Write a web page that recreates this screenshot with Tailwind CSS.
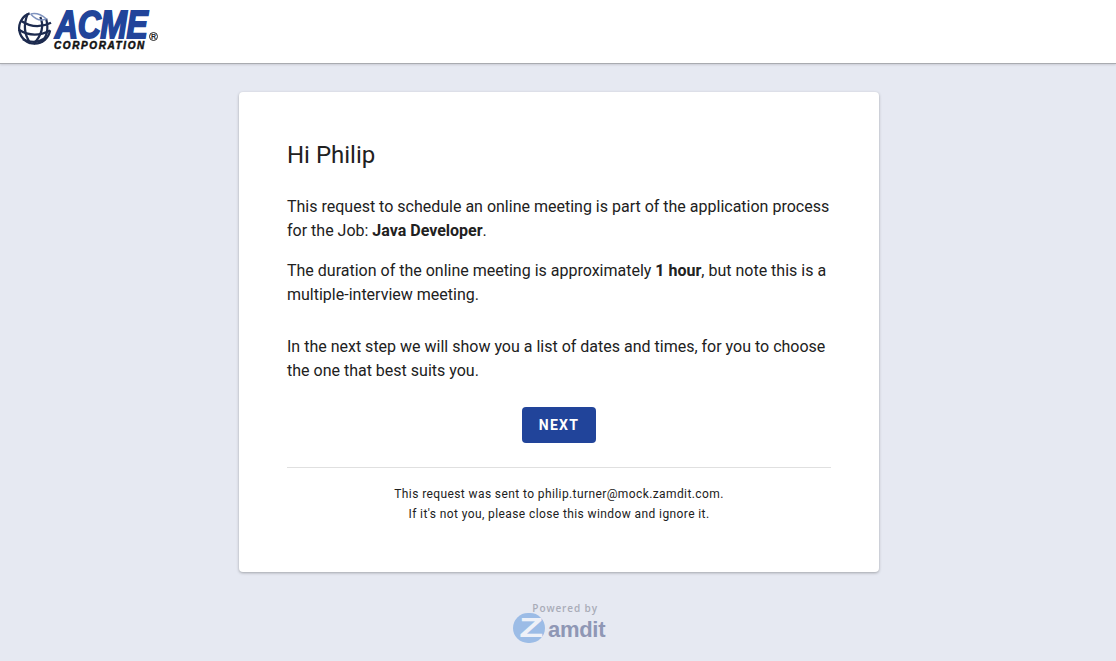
<!doctype html>
<html>
<head>
<meta charset="utf-8">
<script src="https://cdn.jsdelivr.net/npm/@tailwindcss/browser@4"></script>
</head>
<body class="m-0 bg-[#e6e9f2] font-['Roboto',sans-serif] text-[#212121]">
<div class="w-[1116px] h-[661px] overflow-hidden flex flex-col">
  <header class="h-[64px] shrink-0 bg-white border-b border-[#a9abb0] shadow-[0_1px_2px_rgba(0,0,0,0.12)] flex items-start pl-[17px] pt-[11px]">
    <div class="flex items-start">
      <svg width="35" height="35" viewBox="0 0 36 36" fill="none" stroke="#1d2b4f" stroke-width="2.300">
        <path d="M13 2.500 A16 16 0 1 0 34 20"/>
        <path d="M4 10 Q19 20 35 12"/>
        <path d="M1.500 19 Q17 29 34 20"/>
        <path d="M6 29 Q18 35 29 28"/>
        <path d="M11 3 Q4 20 14 33.500"/>
        <path d="M24 6 Q30 20 17 34"/>
        <path d="M30 8 Q34 24 25 32"/>
        <path d="M14 3 Q22 1 30 8 Q22 12 14 3" stroke="#7f93bf" stroke-width="1.500"/>
      </svg>
      <div class="relative w-[105px] h-[40px] ml-[3px]">
        <span class="block w-[93px] h-[29px] origin-top-left scale-x-[0.84] font-['Liberation_Sans',sans-serif] font-bold italic text-[38px] leading-[29px] whitespace-nowrap text-[#21449a] tracking-[-0.5px] [-webkit-text-stroke:1.8px_#21449a]">ACME</span>
        <span class="block w-[110px] h-[9px] mt-[1px] -ml-[1px] font-['Liberation_Sans',sans-serif] font-bold italic text-[10px] leading-[9px] whitespace-nowrap text-[#111] tracking-[1.6px] [-webkit-text-stroke:0.5px_#111]">CORPORATION</span>
        <span class="absolute left-[94px] top-[21px] font-['Liberation_Sans',sans-serif] font-bold text-[7px] leading-none w-[9px] h-[9px] rounded-full border-[1.5px] border-[#222] text-[#222] flex items-center justify-center">R</span>
      </div>
    </div>
  </header>
  <main class="flex flex-col items-center pt-[28px] pl-[2px]">
    <section class="w-[640px] h-[480px] bg-white rounded-[4px] shadow-[0_1px_3px_rgba(0,0,0,0.3)] px-[48px] pt-[48px] text-[16px] leading-[24px]">
      <h1 class="text-[24px] leading-[30px] mb-[25px] font-normal">Hi Philip</h1>
      <p>This request to schedule an online meeting is part of the application process for the Job: <b class="font-bold">Java Developer</b>.</p>
      <p class="mt-[16px]">The duration of the online meeting is approximately <b class="font-bold">1 hour</b>, but note this is a multiple-interview meeting.</p>
      <p class="mt-[28px]">In the next step we will show you a list of dates and times, for you to choose the one that best suits you.</p>
      <div class="flex justify-center mt-[24px]">
        <button class="w-[74px] h-[36px] rounded-[4px] bg-[#21449a] text-white text-[14px] font-bold tracking-[1.25px]">NEXT</button>
      </div>
      <hr class="mt-[24px] border-0 border-t border-[#e0e0e0]">
      <div class="mt-[16px] text-center text-[12px] leading-[20px] tracking-[0.4px]">
        <p>This request was sent to philip.turner@mock.zamdit.com.</p>
        <p>If it's not you, please close this window and ignore it.</p>
      </div>
    </section>
    <div class="mt-[31px] flex flex-col w-[94px]">
      <span class="self-end mr-[8px] font-['Open_Sans',sans-serif] text-[10px] leading-[10px] font-semibold tracking-[0.9px] text-[#a9acb8] whitespace-nowrap">Powered by</span>
      <div class="flex items-end">
        <div class="ml-[1px] w-[32px] h-[30px] rounded-full bg-[#9cbce6] flex items-center justify-center shrink-0">
          <span class="font-['Liberation_Sans',sans-serif] font-bold text-[27px] leading-[30px] text-[#eef1f8] scale-x-[1.45] translate-x-[2px]">Z</span>
        </div>
        <span class="font-['Liberation_Sans',sans-serif] font-bold text-[22px] leading-[26px] text-[#8f97b5] ml-[3px] tracking-[-0.3px]">amdit</span>
      </div>
    </div>
  </main>
</div>
</body>
</html>
